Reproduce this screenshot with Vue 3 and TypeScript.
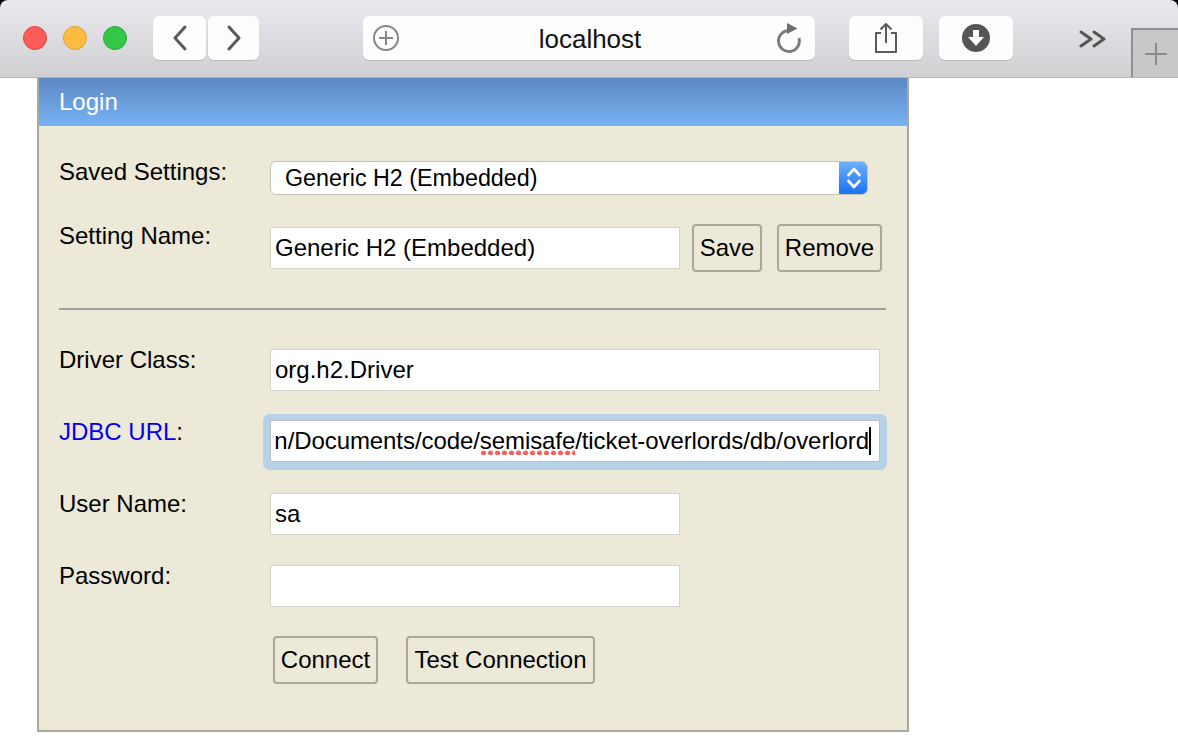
<template>
  <div class="window">
    <header class="toolbar">
      <div class="lights">
        <span class="light red"></span>
        <span class="light yellow"></span>
        <span class="light green"></span>
      </div>
      <div class="nav">
        <div class="tbtn back">
          <svg width="20" height="28" viewBox="0 0 20 28"><path d="M15 3 L5 14 L15 25" /></svg>
        </div>
        <div class="tbtn forward">
          <svg width="20" height="28" viewBox="0 0 20 28"><path d="M5 3 L15 14 L5 25" /></svg>
        </div>
      </div>
      <div class="address">
        <svg class="addr-plus" width="28" height="28" viewBox="0 0 28 28">
          <circle cx="14" cy="14" r="12" />
          <path d="M14 7 V21 M7 14 H21" />
        </svg>
        <span class="host">localhost</span>
        <svg class="reload" width="28" height="32" viewBox="0 0 28 32">
          <path class="arc" d="M14 8.5 A10.5 10.5 0 1 0 24 16" />
          <path class="head" d="M12 1 L22.5 6.5 L12 12 Z" />
        </svg>
      </div>
      <div class="tbtn share">
        <svg width="24" height="32" viewBox="0 0 24 32">
          <path d="M7 11 H2 V30 H22 V11 H17 M12 21 V2 M6.5 7.5 L12 2 L17.5 7.5" />
        </svg>
      </div>
      <div class="tbtn download">
        <svg width="28" height="28" viewBox="0 0 28 28">
          <circle class="disc" cx="14" cy="14" r="14" />
          <path class="arrow" d="M11 6 H17 V13 H22 L14 22 L6 13 H11 Z" />
        </svg>
      </div>
      <svg class="more" width="28" height="18" viewBox="0 0 28 18"><path d="M2 2 L12 9 L2 16 M15 2 L25 9 L15 16" /></svg>
      <div class="newtab">
        <svg width="24" height="24" viewBox="0 0 24 24"><path d="M12 1 V23 M1 12 H23" /></svg>
      </div>
    </header>

    <main class="page">
      <section class="panel">
        <div class="title">Login</div>
        <div class="form">
          <div class="row row-saved">
            <div class="label">Saved Settings:</div>
            <div class="select">
              <span class="select-text">{{ settingName }}</span>
              <span class="select-arrows">
                <svg width="16" height="26" viewBox="0 0 16 26"><path d="M2.5 10 L8 4 L13.5 10 M2.5 16 L8 22 L13.5 16" /></svg>
              </span>
            </div>
          </div>
          <div class="row row-name">
            <div class="label">Setting Name:</div>
            <div class="input short name-input">{{ settingName }}</div>
            <button class="btn save">Save</button>
            <button class="btn remove">Remove</button>
          </div>
          <div class="divider"></div>
          <div class="row row-driver">
            <div class="label">Driver Class:</div>
            <div class="input wide">org.h2.Driver</div>
          </div>
          <div class="row row-url">
            <div class="label"><a class="link">JDBC URL</a>:</div>
            <div class="input wide focused">
              <span class="url">n/Documents/code/<span class="misspelled">semisafe</span>/ticket-overlords/db/overlord</span>
              <span class="caret"></span>
            </div>
          </div>
          <div class="row row-user">
            <div class="label">User Name:</div>
            <div class="input short">sa</div>
          </div>
          <div class="row row-pass">
            <div class="label">Password:</div>
            <div class="input short"></div>
          </div>
          <div class="actions">
            <button class="btn connect">Connect</button>
            <button class="btn test">Test Connection</button>
          </div>
        </div>
      </section>
    </main>
  </div>
</template>

<script setup lang="ts">
import { ref } from 'vue'

const settingName = ref<string>('Generic H2 (Embedded)')
</script>

<style>
html, body {
  margin: 0;
  background: #fff;
}
</style>

<style scoped>
.window {
  width: 1178px;
  height: 736px;
  overflow: hidden;
  /* the black shows only behind the rounded top corners */
  background: linear-gradient(#000 10px, #fff 10px);
  font-family: "Liberation Sans", Arial, sans-serif;
  color: #000;
}
.toolbar {
  position: relative;
  display: flex;
  align-items: flex-start;
  box-sizing: border-box;
  height: 78px;
  padding: 16px 0 0 23px;
  background: linear-gradient(#eaeaee 0, #e6e5ea 12px, #d0cfd2 100%);
  border-bottom: 1px solid #b4b3b5;
  border-radius: 8px 8px 0 0;
}
.lights {
  display: flex;
  gap: 16px;
  margin-top: 10px;
}
.light {
  width: 22px;
  height: 22px;
  border-radius: 50%;
  border: 1px solid;
}
.red { background: #fc5b57; border-color: #e0443e; }
.yellow { background: #fdbc40; border-color: #de9f34; }
.green { background: #33c748; border-color: #27aa35; }
.nav {
  display: flex;
  gap: 2px;
  margin-left: 26px;
}
.tbtn {
  display: flex;
  align-items: center;
  justify-content: center;
  height: 44px;
  background: #fdfdfd;
  border-radius: 6px;
  box-shadow: 0 1px 1px rgba(0, 0, 0, 0.14);
}
.back { width: 53px; }
.forward { width: 51px; }
.tbtn svg path {
  fill: none;
  stroke: #5a5a5a;
  stroke-width: 3;
  stroke-linecap: round;
  stroke-linejoin: round;
}
.address {
  position: relative;
  display: flex;
  align-items: center;
  justify-content: center;
  width: 452px;
  height: 44px;
  margin-left: 104px;
  background: #fdfdfd;
  border-radius: 6px;
  box-shadow: 0 1px 1px rgba(0, 0, 0, 0.14);
}
.host {
  font-size: 26px;
  margin: 2px 0 0 2px;
  color: #111;
}
.addr-plus {
  position: absolute;
  left: 9px;
  top: 8px;
}
.addr-plus circle {
  fill: none;
  stroke: #868686;
  stroke-width: 2;
}
.addr-plus path {
  fill: none;
  stroke: #868686;
  stroke-width: 2;
}
.reload {
  position: absolute;
  right: 12px;
  top: 6px;
}
.reload .arc {
  fill: none;
  stroke: #7c7c7c;
  stroke-width: 2.8;
}
.reload .head {
  fill: #6e6e6e;
}
.share {
  width: 74px;
  margin-left: 34px;
}
.tbtn.share svg path {
  stroke-width: 2;
  stroke-linecap: butt;
}
.download {
  width: 74px;
  margin-left: 16px;
}
.tbtn svg .disc {
  fill: #555;
}
.tbtn svg .arrow {
  fill: #fff;
  stroke: none;
}
.more {
  margin: 14px 0 0 66px;
}
.more path {
  fill: none;
  stroke: #555;
  stroke-width: 3;
  stroke-linecap: round;
  stroke-linejoin: round;
}
.newtab {
  display: flex;
  align-items: center;
  justify-content: center;
  box-sizing: border-box;
  width: 47px;
  height: 49px;
  margin: 12px 0 0 24px;
  background: #c9c7c9;
  border-top: 2px solid #8e8e8e;
  border-left: 2px solid #8e8e8e;
}
.newtab path {
  fill: none;
  stroke: #8a8a8a;
  stroke-width: 2;
}
.page {
  padding-left: 37px;
  background: #fff;
}
.panel {
  box-sizing: border-box;
  width: 872px;
  height: 654px;
  background: #ece9d8;
  border: 2px solid #aca899;
  border-top: 0;
}
.title {
  height: 48px;
  padding-left: 20px;
  line-height: 48px;
  font-size: 24px;
  color: #fff;
  background: linear-gradient(#5c88c4, #78b2f2);
}
.form {
  display: flex;
  flex-direction: column;
  padding: 35px 0 0 20px;
}
.row {
  display: flex;
  align-items: flex-start;
}
.label {
  flex: none;
  width: 211px;
  font-size: 24px;
  line-height: 22px;
}
.link {
  color: #0000ee;
}
.select {
  display: flex;
  align-items: center;
  justify-content: space-between;
  box-sizing: border-box;
  width: 598px;
  height: 34px;
  padding-left: 14px;
  background: #fff;
  border: 1px solid #c6c3b3;
  border-radius: 6px;
  overflow: hidden;
  font-size: 23.3px;
}
.select-text {
  margin-top: 1px;
}
.select-arrows {
  display: flex;
  align-items: center;
  justify-content: center;
  width: 29px;
  height: 34px;
  margin-right: -1px;
  background: linear-gradient(#72b2fb, #1770f5);
}
.select-arrows path {
  fill: none;
  stroke: #fff;
  stroke-width: 2.6;
  stroke-linecap: round;
  stroke-linejoin: round;
}
.row-name {
  margin-top: 29px;
}
.row-name .label {
  padding-top: 1px;
}
.name-input {
  margin-top: 3px;
}
.input {
  display: flex;
  align-items: center;
  box-sizing: border-box;
  height: 42px;
  padding-left: 4px;
  background: #fff;
  border: 1px solid #d4d3cc;
  font-size: 24px;
  white-space: nowrap;
  overflow: hidden;
}
.short { width: 410px; }
.wide { width: 610px; }
.btn {
  box-sizing: border-box;
  height: 48px;
  padding: 0;
  background: #ece9d8;
  border: 2px solid #aca899;
  border-radius: 4px;
  font-family: inherit;
  font-size: 24px;
  color: #000;
}
.save {
  width: 70px;
  margin-left: 12px;
}
.remove {
  width: 105px;
  margin-left: 15px;
}
.divider {
  width: 827px;
  height: 2px;
  margin-top: 36px;
  background: #a0a0a0;
}
.row-driver {
  margin-top: 39px;
}
.row-url {
  margin-top: 29px;
}
.row-url .label {
  padding-top: 1px;
}
.focused {
  justify-content: flex-end;
  padding: 0 8px 0 0;
  border-color: #bdbdbd;
  box-shadow: 0 1px 0 7px #b6d2e9;
  border-radius: 2px;
  overflow: visible;
}
.url {
  display: block;
  overflow: hidden;
  letter-spacing: -0.08px;
}
.misspelled {
  padding-bottom: 2px;
  background: radial-gradient(circle, #f9615c 2.2px, transparent 2.8px) left bottom / 7px 6px repeat-x;
}
.caret {
  flex: none;
  width: 2px;
  height: 28px;
  background: #000;
}
.row-user {
  margin-top: 31px;
}
.row-pass {
  margin-top: 30px;
}
.actions {
  display: flex;
  gap: 28px;
  margin: 29px 0 0 214px;
}
.connect {
  width: 105px;
}
.test {
  width: 189px;
}
</style>
